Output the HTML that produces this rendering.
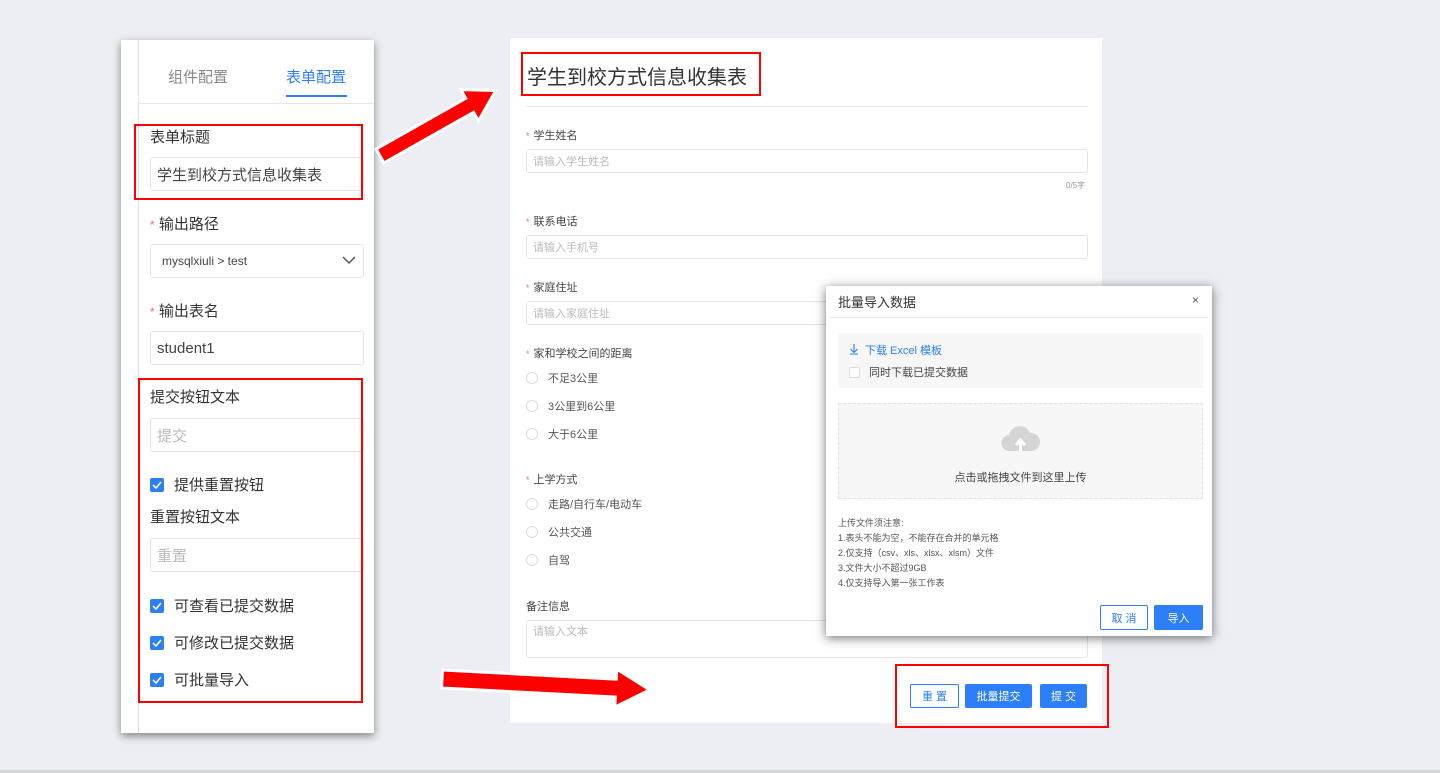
<!DOCTYPE html>
<html><head><meta charset="utf-8"><style>
*{margin:0;padding:0;box-sizing:border-box}
body{width:1440px;height:773px;background:#eceef3;position:relative;overflow:hidden;font-family:"Liberation Sans","Noto Sans CJK SC",sans-serif;color:#333}
.a{position:absolute}
.inp{position:absolute;border:1px solid #e3e5ea;border-radius:3px;background:#fff;color:#bbb;font-size:11px;padding-left:6px;display:flex;align-items:center}
.lbl{position:absolute;font-size:11px;color:#444}
.lbl i{color:#f56c6c;font-style:normal;font-size:9px;margin-right:4px}
.rad{position:absolute;font-size:11px;color:#555;display:flex;align-items:center}
.rad span{width:12px;height:12px;border:1px solid #ddd;border-radius:50%;margin-right:10px;display:inline-block}
.cb{position:absolute;font-size:15px;color:#333;display:flex;align-items:center}
.cb b{width:14px;height:14px;background:#2d7ff9;border-radius:2px;margin-right:10px;display:inline-flex;align-items:center;justify-content:center}
.red{position:absolute;border:2px solid #f00}
.btn{position:absolute;font-size:11px;display:flex;align-items:center;justify-content:center;border-radius:2px}
</style></head><body>
<div class="a" style="left:121px;top:40px;width:253px;height:693px;background:#fff;box-shadow:0 3px 8px rgba(0,0,0,.45)"></div>
<div class="a" style="left:138px;top:40px;width:1px;height:693px;background:#e3e3e3"></div>
<div class="a" style="left:138px;top:103px;width:236px;height:1px;background:#e6e6e6"></div>
<div class="a" style="left:168px;top:66px;font-size:15px;color:#888">组件配置</div>
<div class="a" style="left:286px;top:66px;font-size:15px;color:#2d7ff9">表单配置</div>
<div class="a" style="left:286px;top:95px;width:61px;height:2px;background:#2d7ff9"></div>
<div class="a" style="left:150px;top:126px;font-size:15px">表单标题</div>
<div class="inp" style="left:150px;top:157px;width:214px;height:34px;font-size:15px;color:#444">学生到校方式信息收集表</div>
<div class="red" style="left:134px;top:124px;width:229px;height:76px"></div>
<div class="a" style="left:150px;top:213px;font-size:15px"><span style="color:#f56c6c;font-size:12px">*</span> 输出路径</div>
<div class="inp" style="left:150px;top:244px;width:214px;height:34px;font-size:12px;color:#444;padding-left:11px">mysqlxiuli &gt; test</div>
<svg class="a" style="left:342px;top:255px" width="14" height="10"><path d="M1 2l6 6 6-6" fill="none" stroke="#555" stroke-width="1.5"/></svg>
<div class="a" style="left:150px;top:300px;font-size:15px"><span style="color:#f56c6c;font-size:12px">*</span> 输出表名</div>
<div class="inp" style="left:150px;top:331px;width:214px;height:34px;font-size:15px;color:#444">student1</div>
<div class="a" style="left:150px;top:386px;font-size:15px">提交按钮文本</div>
<div class="inp" style="left:150px;top:418px;width:214px;height:34px;font-size:15px">提交</div>
<div class="cb" style="left:150px;top:474px"><b><svg width="10" height="8"><path d="M1 4l3 3 5-6" fill="none" stroke="#fff" stroke-width="1.6"/></svg></b>提供重置按钮</div>
<div class="a" style="left:150px;top:506px;font-size:15px">重置按钮文本</div>
<div class="inp" style="left:150px;top:538px;width:214px;height:34px;font-size:15px">重置</div>
<div class="cb" style="left:150px;top:595px"><b><svg width="10" height="8"><path d="M1 4l3 3 5-6" fill="none" stroke="#fff" stroke-width="1.6"/></svg></b>可查看已提交数据</div>
<div class="cb" style="left:150px;top:632px"><b><svg width="10" height="8"><path d="M1 4l3 3 5-6" fill="none" stroke="#fff" stroke-width="1.6"/></svg></b>可修改已提交数据</div>
<div class="cb" style="left:150px;top:669px"><b><svg width="10" height="8"><path d="M1 4l3 3 5-6" fill="none" stroke="#fff" stroke-width="1.6"/></svg></b>可批量导入</div>
<div class="red" style="left:138px;top:378px;width:225px;height:325px"></div>

<div class="a" style="left:510px;top:38px;width:592px;height:685px;background:#fff"></div>
<div class="a" style="left:527px;top:61px;font-size:20px;color:#333">学生到校方式信息收集表</div>
<div class="red" style="left:521px;top:52px;width:240px;height:44px"></div>
<div class="a" style="left:526px;top:106px;width:562px;height:1px;background:#e6e6e6"></div>
<div class="lbl" style="left:526px;top:127px"><i>*</i>学生姓名</div>
<div class="inp" style="left:526px;top:149px;width:562px;height:24px">请输入学生姓名</div>
<div class="a" style="left:1066px;top:180px;font-size:8px;color:#999">0/5字</div>
<div class="lbl" style="left:526px;top:213px"><i>*</i>联系电话</div>
<div class="inp" style="left:526px;top:235px;width:562px;height:24px">请输入手机号</div>
<div class="lbl" style="left:526px;top:279px"><i>*</i>家庭住址</div>
<div class="inp" style="left:526px;top:301px;width:562px;height:24px">请输入家庭住址</div>
<div class="lbl" style="left:526px;top:345px"><i>*</i>家和学校之间的距离</div>
<div class="rad" style="left:526px;top:370px"><span></span>不足3公里</div>
<div class="rad" style="left:526px;top:398px"><span></span>3公里到6公里</div>
<div class="rad" style="left:526px;top:426px"><span></span>大于6公里</div>
<div class="lbl" style="left:526px;top:471px"><i>*</i>上学方式</div>
<div class="rad" style="left:526px;top:496px"><span></span>走路/自行车/电动车</div>
<div class="rad" style="left:526px;top:524px"><span></span>公共交通</div>
<div class="rad" style="left:526px;top:552px"><span></span>自驾</div>
<div class="lbl" style="left:526px;top:598px">备注信息</div>
<div class="inp" style="left:526px;top:620px;width:562px;height:38px;align-items:flex-start;padding-top:2px">请输入文本</div>
<div class="btn" style="left:910px;top:684px;width:49px;height:24px;border:1px solid #2d7ff9;color:#2d7ff9;background:#fff">重 置</div>
<div class="btn" style="left:965px;top:684px;width:67px;height:24px;background:#2d7ff9;color:#fff">批量提交</div>
<div class="btn" style="left:1040px;top:684px;width:47px;height:24px;background:#2d7ff9;color:#fff">提 交</div>
<div class="red" style="left:895px;top:664px;width:214px;height:64px"></div>

<div class="a" style="left:826px;top:286px;width:386px;height:350px;background:#fff;box-shadow:0 2px 10px rgba(0,0,0,.55)"></div>
<div class="a" style="left:838px;top:292px;font-size:13px;color:#333">批量导入数据</div>
<div class="a" style="left:1192px;top:293px;font-size:12px;color:#555">×</div>
<div class="a" style="left:830px;top:317px;width:378px;height:1px;background:#eee"></div>
<div class="a" style="left:838px;top:333px;width:365px;height:55px;background:#f7f7f8"></div>
<svg class="a" style="left:849px;top:343px" width="10" height="12"><path d="M5 1v8M1.5 6l3.5 3.5L8.5 6M1 11h8" fill="none" stroke="#2d7ff9" stroke-width="1.1"/></svg>
<div class="a" style="left:865px;top:342px;font-size:11px;color:#2d7ff9">下载 Excel 模板</div>
<div class="a" style="left:849px;top:367px;width:11px;height:11px;border:1px solid #ddd;background:#fff;border-radius:2px"></div>
<div class="a" style="left:869px;top:364px;font-size:11px;color:#444">同时下载已提交数据</div>
<div class="a" style="left:838px;top:403px;width:365px;height:96px;background:#f7f7f8;border:1px dashed #e3e3e3"></div>
<svg class="a" style="left:1001px;top:424px" width="39" height="28" viewBox="0 0 39 28"><path d="M9 27a8 8 0 0 1-1-16 11 11 0 0 1 21-2 9 9 0 0 1 2 18z" fill="#d5d5d5"/><path d="M19.5 27V17M15 21l4.5-5 4.5 5" fill="none" stroke="#fff" stroke-width="3"/></svg>
<div class="a" style="left:838px;top:469px;width:365px;text-align:center;font-size:11px;color:#444">点击或拖拽文件到这里上传</div>
<div class="a" style="left:838px;top:516px;font-size:9px;color:#555;line-height:15px">上传文件须注意:<br>1.表头不能为空，不能存在合并的单元格<br>2.仅支持（csv、xls、xlsx、xlsm）文件<br>3.文件大小不超过9GB<br>4.仅支持导入第一张工作表</div>
<div class="btn" style="left:1100px;top:605px;width:48px;height:25px;border:1px solid #2d7ff9;color:#2d7ff9;background:#fff">取 消</div>
<div class="btn" style="left:1154px;top:605px;width:49px;height:25px;background:#2d7ff9;color:#fff">导入</div>

<svg class="a" style="left:0;top:0" width="1440" height="773">
<g transform="translate(380,156) rotate(-29.5)">
<polygon points="0,-8 103,-8 103,-18 133,0 103,18 103,8 0,8" fill="#f00" stroke="#fff" stroke-width="3"/>
</g>
<g transform="translate(442,679) rotate(3)">
<polygon points="0,-9 174,-9 174,-19 208,0 174,19 174,9 0,9" fill="#f00" stroke="#fff" stroke-width="3"/>
</g>
</svg>
<div class="a" style="left:0;top:770px;width:1440px;height:3px;background:#d4d6da"></div>
</body></html>
